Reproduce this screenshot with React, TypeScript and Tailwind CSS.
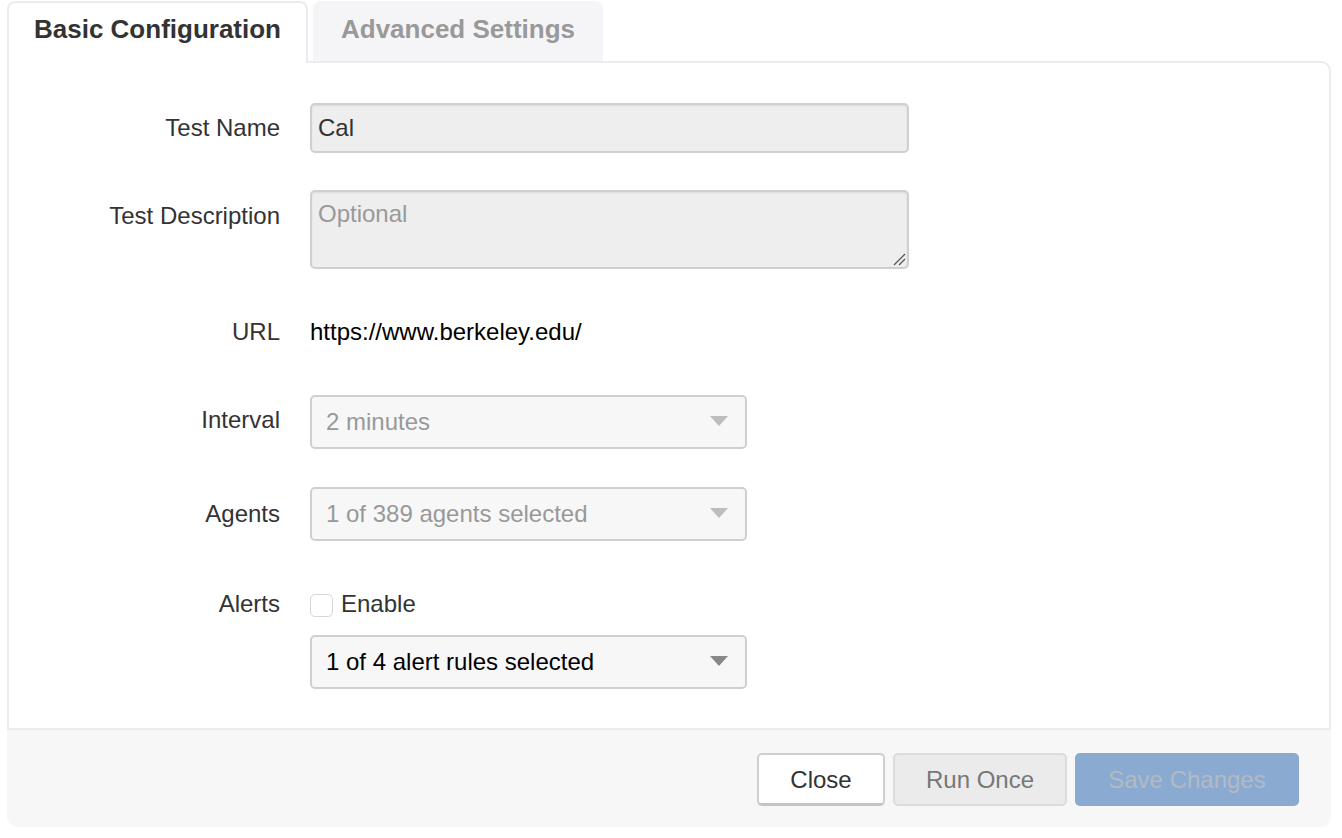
import React from "react";

const Caret = ({ color }: { color: string }) => (
  <svg width="18" height="10" viewBox="0 0 18 10" className="shrink-0">
    <polygon points="0,0 18,0 9,10" fill={color} />
  </svg>
);

const Label = ({ children, className = "pb-[2px]" }: { children: React.ReactNode; className?: string }) => (
  <div className={`w-[271px] shrink-0 text-right text-[#333] ${className}`}>{children}</div>
);

export default function App() {
  return (
    <div className="w-[1342px] h-[838px] bg-white font-['Liberation_Sans','Helvetica',Arial,sans-serif] text-[24px] leading-[33px] overflow-hidden">
      <div className="pl-[7px] pr-[11px] pt-[1px]">
        {/* Tabs */}
        <div className="flex gap-[5px] h-[60px] relative z-10">
          <div className="w-[301px] h-[62px] bg-white border-2 border-b-0 border-[#ebebf0] rounded-t-[8px] flex items-center justify-center font-bold text-[26px] text-[#333] pb-[8px]">
            Basic Configuration
          </div>
          <div className="w-[290px] h-[60px] bg-[#f5f5f7] rounded-t-[8px] flex items-center justify-center font-bold text-[26px] text-[#999] pb-[4px]">
            Advanced Settings
          </div>
        </div>

        {/* Panel */}
        <div className="h-[669px] border-2 border-[#ebebf0] rounded-tr-[10px] bg-white flex flex-col pt-[40px]">
          {/* Test Name */}
          <div className="flex items-center h-[50px]">
            <Label>Test Name</Label>
            <div className="ml-[30px] w-[599px] h-[50px] bg-[#eeeeee] border-2 border-[#cfcfcf] rounded-[5px] shadow-[inset_0_1px_2px_rgba(0,0,0,0.08)] flex items-center px-[6px] pb-[2px] text-[#333]">
              Cal
            </div>
          </div>

          {/* Test Description */}
          <div className="flex mt-[37px] h-[79px]">
            <Label className="pt-[9px]">Test Description</Label>
            <div className="relative ml-[30px] w-[599px] h-[79px] bg-[#eeeeee] border-2 border-[#cfcfcf] rounded-[5px] shadow-[inset_0_1px_2px_rgba(0,0,0,0.08)] px-[6px] pt-[5px] text-[#999]">
              Optional
              <svg width="14" height="14" viewBox="0 0 14 14" className="absolute right-[1px] bottom-[1px]">
                <line x1="2" y1="13" x2="13" y2="2" stroke="#555" strokeWidth="1.2" />
                <line x1="7" y1="13" x2="13" y2="7" stroke="#555" strokeWidth="1.2" />
              </svg>
            </div>
          </div>

          {/* URL */}
          <div className="flex items-center mt-[38px] h-[50px]">
            <Label>URL</Label>
            <div className="ml-[30px] pb-[2px] text-black">https://www.berkeley.edu/</div>
          </div>

          {/* Interval */}
          <div className="flex items-center mt-[38px] h-[54px]">
            <Label className="pb-[6px]">Interval</Label>
            <div className="ml-[30px] w-[437px] h-[54px] bg-[#f7f7f7] border-2 border-[#cfcfcf] rounded-[5px] flex items-center justify-between pl-[14px] pr-[17px] pb-[2px] text-[#999]">
              <span>2 minutes</span>
              <Caret color="#bdbdbd" />
            </div>
          </div>

          {/* Agents */}
          <div className="flex items-center mt-[38px] h-[54px]">
            <Label>Agents</Label>
            <div className="ml-[30px] w-[437px] h-[54px] bg-[#f7f7f7] border-2 border-[#cfcfcf] rounded-[5px] flex items-center justify-between pl-[14px] pr-[17px] pb-[2px] text-[#999]">
              <span>1 of 389 agents selected</span>
              <Caret color="#bdbdbd" />
            </div>
          </div>

          {/* Alerts */}
          <div className="flex mt-[46px]">
            <Label className="">Alerts</Label>
            <div className="ml-[30px] flex flex-col">
              <div className="flex items-center h-[33px]">
                <div className="w-[23px] h-[23px] border border-[#d6d6d6] rounded-[5px] bg-white mt-[4px]" />
                <span className="ml-[8px] text-[#333]">Enable</span>
              </div>
              <div className="mt-[15px] w-[437px] h-[54px] bg-[#f7f7f7] border-2 border-[#cfcfcf] rounded-[5px] flex items-center justify-between pl-[14px] pr-[17px] pb-[2px] text-black">
                <span>1 of 4 alert rules selected</span>
                <Caret color="#888888" />
              </div>
            </div>
          </div>
        </div>

        {/* Footer */}
        <div className="h-[97px] bg-[#f7f7f7] rounded-b-[10px] flex items-center justify-end gap-[8px] pr-[32px] pt-[2px]">
          <button className="w-[128px] h-[53px] bg-white border-2 border-[#cfcfcf] border-b-[3px] border-b-[#c4c4c4] rounded-[5px] text-[#333] text-[24px]">
            Close
          </button>
          <button className="w-[174px] h-[53px] bg-[#ebebeb] border-2 border-[#dcdcdc] rounded-[5px] text-[#777] text-[24px]">
            Run Once
          </button>
          <button className="w-[224px] h-[53px] bg-[#8aaad1] rounded-[5px] text-[#b3bac3] text-[24px]">
            Save Changes
          </button>
        </div>
      </div>
    </div>
  );
}
